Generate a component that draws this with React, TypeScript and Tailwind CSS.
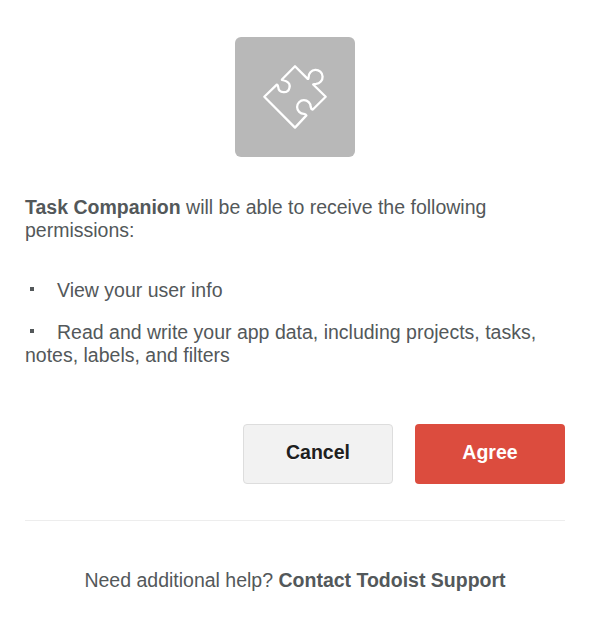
import React from "react";

const permissions = [
  "View your user info",
  "Read and write your app data, including projects, tasks, notes, labels, and filters",
];

function PuzzleTile() {
  return (
    <div className="h-[120px] w-[120px] overflow-hidden rounded-[6px] bg-[#b8b8b8]">
      <svg
        viewBox="0 0 120 120"
        className="h-full w-full"
        fill="none"
        stroke="#ffffff"
        strokeWidth="2.3"
        strokeLinejoin="round"
      >
        <path d="M60 29.2 L72.7 41.9 Q73.5 42.2 73.6 40.2 A7 7 0 1 1 81 46.9 Q79 46.9 78.2 47.5 L90.7 59.8 L77.8 72.5 Q76 72.2 75.7 70 A6.8 6.8 0 1 0 69 76.8 Q70.8 77 71.4 78.4 L60 90.6 L29.3 59.8 L41.8 47.6 Q43.1 48.2 43.2 50 A5.7 5.7 0 1 0 51.2 44.3 Q49.5 43.6 47 43 L46.9 42.5 Z" />
      </svg>
    </div>
  );
}

export default function App() {
  return (
    <main className="flex h-[636px] w-[602px] flex-col bg-white pt-[37px] pr-[37px] pl-[25px] font-['Liberation_Sans',Arial,sans-serif] text-[19.5px] leading-[23px] text-[#53585a]">
      <div className="flex justify-center">
        <PuzzleTile />
      </div>
      <p className="mt-[39px]">
        <strong>Task Companion</strong> will be able to receive the following permissions:
      </p>
      <ul className="mt-[37px] flex flex-col gap-[19px]">
        {permissions.map((permission) => (
          <li key={permission}>
            <span className="mr-[23px] ml-[5px] inline-block h-1 w-1 -translate-y-[6px] bg-[#53585a]" />
            {permission}
          </li>
        ))}
      </ul>
      <div className="mt-[57px] flex justify-end gap-[22px] font-bold">
        <button className="h-[60px] w-[150px] rounded-[4px] border border-[#dddddd] bg-[#f2f2f2] pb-1 text-[#202020] [text-shadow:0_1px_0_#fff]">
          Cancel
        </button>
        <button className="h-[60px] w-[150px] rounded-[4px] bg-[#dc4c3e] pb-1 text-white">Agree</button>
      </div>
      <hr className="mt-9 border-t border-[#ededed]" />
      <footer className="mt-12 text-center">
        Need additional help? <strong>Contact Todoist Support</strong>
      </footer>
    </main>
  );
}
